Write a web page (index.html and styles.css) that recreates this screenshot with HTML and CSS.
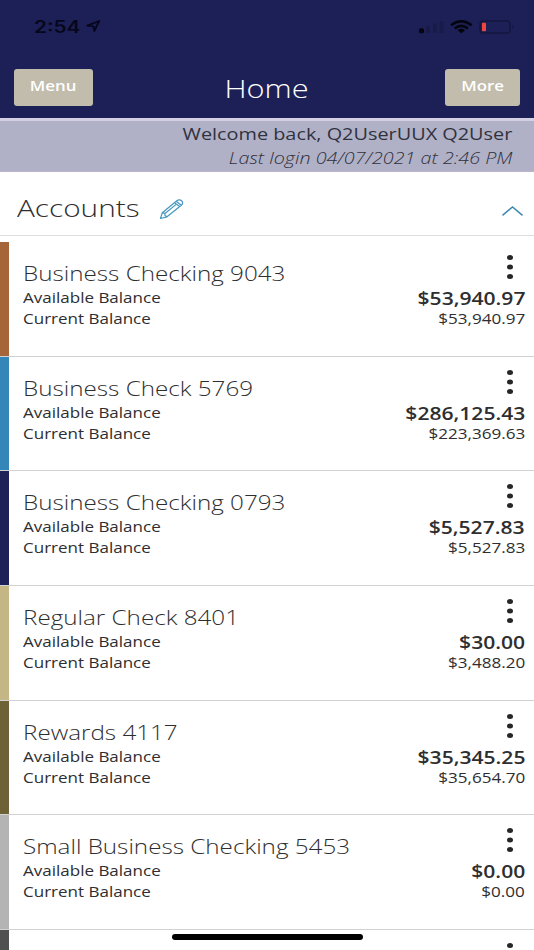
FILE: index.html
```
<!DOCTYPE html>
<html lang="en">
<head>
<meta charset="utf-8">
<title>Home</title>
<link rel="stylesheet" href="styles.css">
</head>
<body>
<div class="app">
  <header class="top">
    <div class="status">
      <span class="clock wide">2:54</span>
      <svg class="arrow" width="15" height="12" viewBox="0 0 15 12"><path d="M1.2 5.600 L13.200 1 L8.300 11 L7.600 6.300 Z" fill="none" stroke="#06071c" stroke-width="1.800" stroke-linejoin="round"/></svg>
      <svg class="signals" width="98" height="16" viewBox="0 0 98 16">
        <rect x="1" y="8.200" width="5" height="5" rx="1.500" fill="#04050f"/>
        <g fill="#181b48"><rect x="8" y="6" width="4" height="7" rx="1"/><rect x="15" y="3.500" width="4" height="9.500" rx="1"/><rect x="21.500" y="1" width="4" height="12" rx="1"/></g>
        <g fill="none" stroke="#03040c" stroke-width="2.500"><path d="M33 5.300 Q43.300 -2.700 53.600 5.300"/><path d="M36.700 8.500 Q43.300 3.300 49.900 8.500"/></g>
        <path d="M39.500 10.300 Q43.300 7.400 47.100 10.300 L43.300 13.300Z" fill="#03040c"/>
        <rect x="62" y="1" width="30" height="12" rx="3" fill="none" stroke="#14163e" stroke-width="1.400"/>
        <rect x="64" y="2.700" width="4" height="8.600" rx="1" fill="#f0453f"/>
        <path d="M94.500 5 Q97 7 94.500 9Z" fill="#14163e"/>
      </svg>
    </div>
    <nav class="bar">
      <button class="btn menu"><span class="wide">Menu</span></button>
      <h1 class="title wide">Home</h1>
      <button class="btn more"><span class="wide">More</span></button>
    </nav>
  </header>
  <section class="welcome">
    <div class="hello wide">Welcome back, Q2UserUUX Q2User</div>
    <div class="login wide">Last login 04/07/2021 at 2:46 PM</div>
  </section>
  <section class="heading">
    <h2 class="accounts wide">Accounts</h2>
    <svg class="pencil" width="25" height="21" viewBox="0 0 25 21" fill="none" stroke="#4596c0" stroke-width="1.200" stroke-linejoin="round"><path d="M1.500 19.500 L3.300 13.700 L17.500 2 Q20.500 -.2 22.800 2 Q24.700 4.200 22.300 6.200 L8 17.800Z M3.300 13.700 L5.800 14.400 L6 16.500 L8 17.800 M15.500 3.700 L20.600 7.600 M17.200 2.300 L22.300 6.200 M6.300 14.300 L16.800 5.600"/></svg>
    <svg class="chevron" width="23" height="12" viewBox="0 0 23 12"><path d="M1.500 10.300 L11.500 2 L21.500 10.300" fill="none" stroke="#3e88ae" stroke-width="1.500"/></svg>
  </section>
  <main class="list">
    <article class="row copper"><div class="names"><h3 class="wide">Business Checking 9043</h3><p class="wide">Available Balance</p><p class="wide">Current Balance</p></div><div class="sums"><i class="dots"></i><b class="wide">$53,940.97</b><span class="wide">$53,940.97</span></div></article>
    <article class="row blue"><div class="names"><h3 class="wide">Business Check 5769</h3><p class="wide">Available Balance</p><p class="wide">Current Balance</p></div><div class="sums"><i class="dots"></i><b class="wide">$286,125.43</b><span class="wide">$223,369.63</span></div></article>
    <article class="row navy"><div class="names"><h3 class="wide">Business Checking 0793</h3><p class="wide">Available Balance</p><p class="wide">Current Balance</p></div><div class="sums"><i class="dots"></i><b class="wide">$5,527.83</b><span class="wide">$5,527.83</span></div></article>
    <article class="row sand"><div class="names"><h3 class="wide">Regular Check 8401</h3><p class="wide">Available Balance</p><p class="wide">Current Balance</p></div><div class="sums"><i class="dots"></i><b class="wide">$30.00</b><span class="wide">$3,488.20</span></div></article>
    <article class="row olive"><div class="names"><h3 class="wide">Rewards 4117</h3><p class="wide">Available Balance</p><p class="wide">Current Balance</p></div><div class="sums"><i class="dots"></i><b class="wide">$35,345.25</b><span class="wide">$35,654.70</span></div></article>
    <article class="row silver"><div class="names"><h3 class="wide">Small Business Checking 5453</h3><p class="wide">Available Balance</p><p class="wide">Current Balance</p></div><div class="sums"><i class="dots"></i><b class="wide">$0.00</b><span class="wide">$0.00</span></div></article>
    <article class="row dark"><div class="names"></div><div class="sums"><i class="dots"></i></div></article>
  </main>
  <div class="home-bar"></div>
</div>
</body>
</html>
```
FILE: styles.css
```
* { box-sizing: border-box; margin: 0; padding: 0; }
body { background: #fff; font-family: "Open Sans", "Noto Sans", sans-serif; color: #2e2e30; }
.app { position: relative; width: 534px; height: 950px; overflow: hidden; }

/* Letterforms are drawn extended */
.wide { display: block; width: max-content; white-space: nowrap; transform: scaleX(1.22); transform-origin: left center; }

.top { height: 118px; background: #1c2056; }
.status { display: flex; height: 68px; padding: 0 18px 0 33.500px; align-items: flex-start; }
.clock { font: 600 17px/20px Inter, sans-serif; color: #06071c; margin-top: 17px; width: 52px; }
.arrow { margin-top: 20px; }
.signals { margin: 20px 0 0 auto; }
.bar { display: flex; justify-content: space-between; align-items: flex-start; padding: 1px 14px 0; }
.btn { height: 37px; border: 0; border-radius: 3px; background: #c1bcac; color: #fff; font: 600 13.800px/20px "Open Sans", sans-serif; display: flex; justify-content: center; padding-top: 7px; }
.btn .wide, .title { transform-origin: center; }
.menu { width: 79px; }
.more { width: 75px; }
.title { font-size: 25.200px; font-weight: 300; line-height: 36px; color: #fff; margin: 1px 5px 0 0; }

.welcome { height: 54px; background: #b0b1c7; border-top: 3px solid #d3d0e3; border-bottom: 1px solid #bdb5cb; padding: 2px 22px 0 0; display: flex; flex-direction: column; align-items: flex-end; }
.welcome .wide, .sums .wide { transform-origin: right center; }
.hello { font-size: 16.300px; line-height: 23px; color: #30323e; }
.login { font-size: 16.200px; line-height: 24px; font-style: italic; font-weight: 300; color: #30323e; }

.heading { height: 64px; border-bottom: 1px solid #dedede; display: flex; padding: 0 10px 0 17px; }
.accounts { font-size: 24.400px; font-weight: 300; line-height: 34px; margin-top: 19px; width: 142px; }
.pencil { margin-top: 27px; }
.chevron { margin: 33px 0 0 auto; }

.list { padding-top: 6px; }
.row { position: relative; height: 114.650px; border-bottom: 1.500px solid #d2d2d4; display: flex; justify-content: space-between; padding: 17px 9px 0 23px; }
.row::before { content: ""; position: absolute; left: 0; top: 0; bottom: 0; width: 8.500px; background: var(--accent); }
.copper { --accent: #a56538; }
.blue { --accent: #3586b8; }
.navy { --accent: #1e2058; }
.sand { --accent: #c4b785; }
.olive { --accent: #6d6136; }
.silver { --accent: #b4b4b4; }
.dark { --accent: #505050; }
.names h3 { font-size: 19.850px; font-weight: 300; line-height: 28px; padding-top: 1px; margin-bottom: -1px; }
.names p { font-size: 13.950px; line-height: 21px; color: #2e2e30; }
.sums { display: flex; flex-direction: column; align-items: flex-end; }
.dots { width: 6px; height: 5px; border-radius: 50%; background: #262626; margin: -4px 12.500px 28px 0; box-shadow: 0 9.500px #262626, 0 19px #262626; }
.sums b { font-size: 17.300px; font-weight: 600; line-height: 21px; }
.sums span { font-size: 14px; line-height: 20px; }
.home-bar { position: absolute; left: 172px; top: 934px; width: 191px; height: 6px; border-radius: 3px; background: #000; }
```
